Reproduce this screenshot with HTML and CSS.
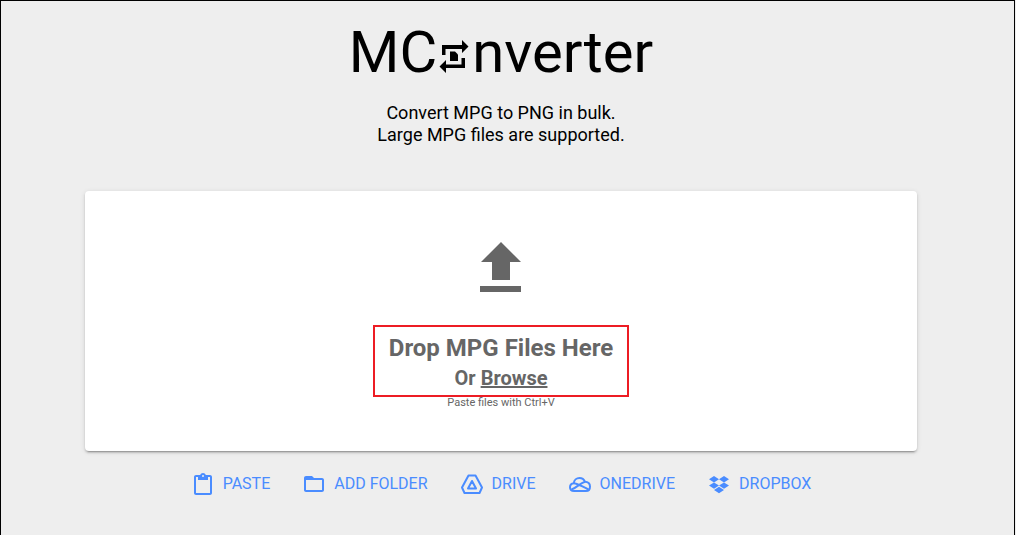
FILE: index.html
```
<!DOCTYPE html>
<html lang="en">
<head>
<meta charset="utf-8">
<meta name="viewport" content="width=device-width, initial-scale=1">
<title>MConverter - MPG to PNG</title>
<link rel="stylesheet" href="styles.css">
</head>
<body>
<main class="page">
  <header class="header">
    <h1 class="logo" aria-label="MConverter">
      <span>MC</span>
      <svg class="logo-icon" viewBox="0 0 30 34" aria-hidden="true">
        <path d="M3 15V5H23V0L29.500 6.500L23 13V9H6.500V15ZM26 18V28H7V33L0.500 26.500L7 20V24.500H22.500V18Z"/>
        <path d="M11 11.500H16L19 14.500V21H11Z"/>
      </svg>
      <span>nverter</span>
    </h1>
    <p class="intro">Convert MPG to PNG in bulk.<br>Large MPG files are supported.</p>
  </header>

  <section class="drop-card">
    <svg class="upload-icon" viewBox="0 0 42 52" aria-hidden="true">
      <path d="M21 1L41 21H30V39H12V21H1ZM0 45H41V51H0Z"/>
    </svg>
    <div class="drop-text">
      <h2>Drop MPG Files Here</h2>
      <p>Or <a href="#">Browse</a></p>
    </div>
    <small class="hint">Paste files with Ctrl+V</small>
  </section>

  <div class="sources">
    <button type="button">
      <svg viewBox="0 0 24 24"><path d="M19 3h-4.180C14.400 1.840 13.300 1 12 1s-2.400.84-2.820 2H5c-1.100 0-2 .9-2 2v16c0 1.100.9 2 2 2h14c1.100 0 2-.9 2-2V5c0-1.100-.9-2-2-2zm-7 0a1 1 0 1 1 0 2 1 1 0 0 1 0-2zm7 18H5V5h2v3h10V5h2z"/></svg>
      PASTE
    </button>
    <button type="button">
      <svg viewBox="0 0 24 24"><path d="M20 6h-8l-2-2H4c-1.100 0-2 .9-2 2v12c0 1.100.9 2 2 2h16c1.100 0 2-.9 2-2V8c0-1.100-.9-2-2-2zm0 12H4V8h16z"/></svg>
      ADD FOLDER
    </button>
    <button type="button">
      <svg viewBox="0 0 24 24" class="line"><path d="M8.500 3.500H15.500L22 15.500L19.500 21H4.500L2 15.500Z"/><path d="M12 9L16 16.500H8Z"/></svg>
      DRIVE
    </button>
    <button type="button">
      <svg viewBox="0 0 24 24" class="line"><path d="M6 19C3.500 19 2 17.500 2 15.300C2 13 3.500 11.400 5.800 11.200C6 8.300 8.500 6 11.500 6C14 6 16 7.400 17 9.700C20 9.700 22 11.700 22 14.500C22 17.200 20.300 19 18 19Z"/><path d="M5.800 11.200C9 11.200 12 13.500 20.500 17.500M3.500 17.500C8.500 16 12 11 17 9.700"/></svg>
      ONEDRIVE
    </button>
    <button type="button">
      <svg viewBox="0 0 24 24"><path d="M7 4L12 7.200L7 10.400L2 7.200ZM17 4L22 7.200L17 10.400L12 7.200ZM7 10.400L12 13.600L7 16.800L2 13.600ZM17 10.400L22 13.600L17 16.800L12 13.600ZM12 14.800L17 18L12 21.200L7 18Z"/></svg>
      DROPBOX
    </button>
  </div>
</main>
</body>
</html>
```

FILE: styles.css
```
* { box-sizing: border-box; }
body { margin: 0; background: #eee; color: #000; font-family: Roboto, sans-serif; }
h1, h2, p { margin: 0; font-weight: 400; }

.page {
    min-height: 100vh;
    margin-right: 1px;
    padding: 16px 97px 24px 84px;
    border: 1px solid #000;
    border-bottom: 0;
}

.header { text-align: center; }
.logo { display: flex; justify-content: center; align-items: center; font-size: 58px; line-height: 70px; }
.logo-icon { width: 30px; height: 34px; margin: 10px 3px 0 2px; }
.intro { margin-top: 15px; font-size: 18px; line-height: 22px; }

.drop-card {
    display: flex;
    flex-direction: column;
    align-items: center;
    margin-top: 45px;
    padding: 50px 16px 42px;
    background: #fff;
    border-radius: 4px;
    box-shadow: 0 3px 1px -2px rgba(0,0,0,0.2), 0 2px 2px 0 rgba(0,0,0,0.14), 0 1px 5px 0 rgba(0,0,0,0.12);
    color: #666;
}
.upload-icon { width: 42px; height: 52px; fill: #666; }
.drop-text { margin-top: 32px; padding: 6px 14px 1px; border: 2px solid #ed1c24; text-align: center; }
.drop-text h2 { font-size: 24px; font-weight: 700; line-height: 30px; }
.drop-text p { font-size: 20px; font-weight: 700; line-height: 31px; }
.drop-text a { color: inherit; }
.hint { font-size: 11px; line-height: 12px; }

.sources { display: flex; flex-wrap: wrap; justify-content: center; gap: 12px 32px; margin-top: 21px; }
.sources button {
    display: flex;
    align-items: center;
    gap: 8px;
    padding: 0;
    border: 0;
    background: none;
    color: #4a8cff;
    font: 16px/24px Roboto, sans-serif;
    cursor: pointer;
}
.sources svg { width: 24px; height: 24px; fill: currentColor; }
.sources .line { fill: none; stroke: currentColor; stroke-width: 2; stroke-linejoin: round; }
```
